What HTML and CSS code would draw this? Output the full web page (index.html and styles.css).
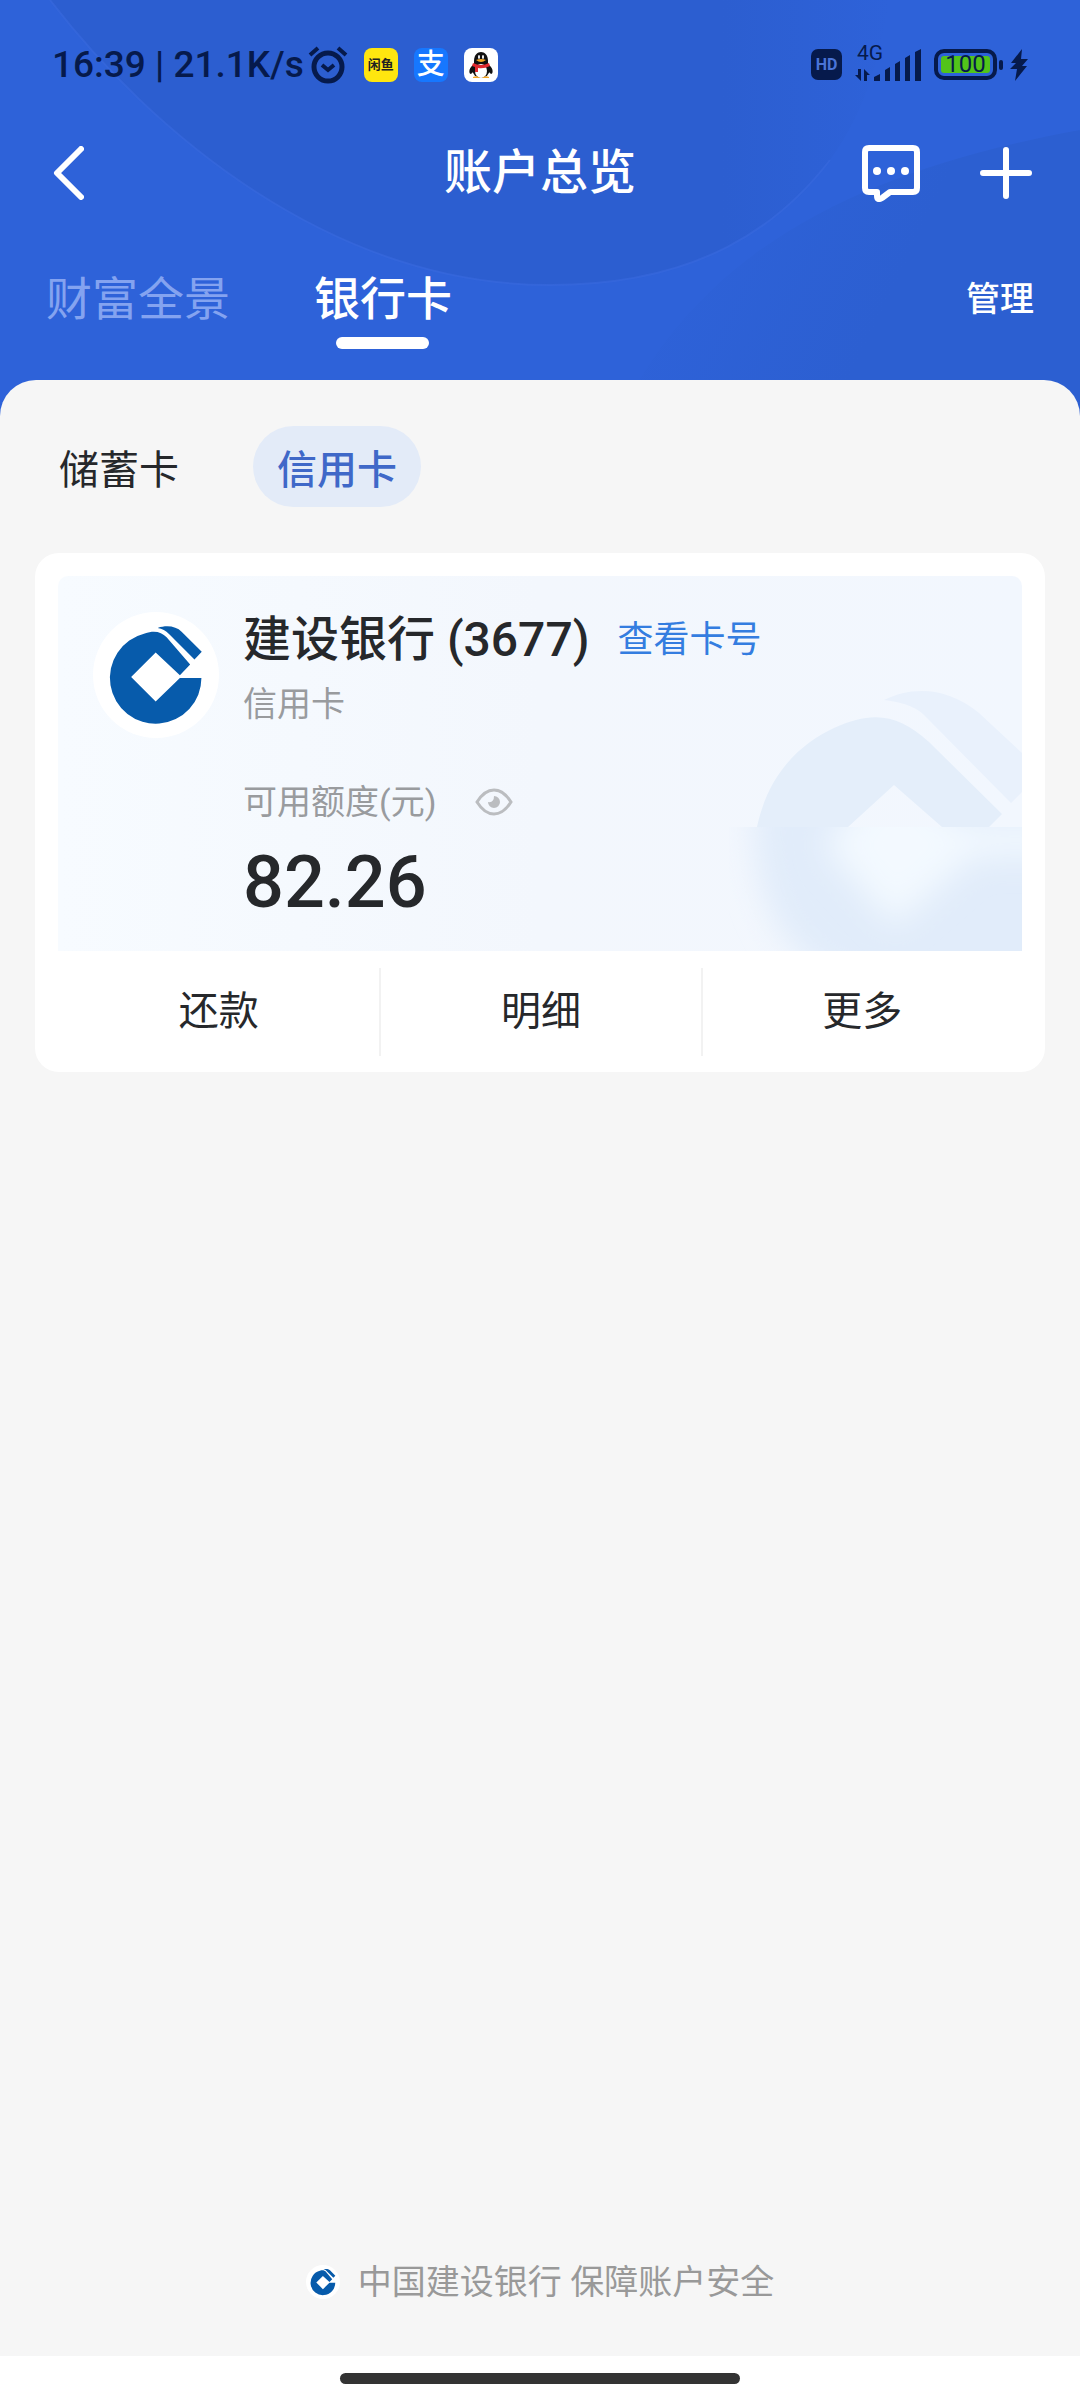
FILE: index.html
```
<!DOCTYPE html>
<html lang="zh-CN">
<head>
  <meta charset="UTF-8" />
  <meta name="viewport" content="width=device-width, initial-scale=1.0"/>
  <title>账户总览</title>
  <link rel="stylesheet" href="styles.css">
</head>
<body>
  <!-- shared bank logo -->
  <svg class="defs" width="0" height="0" aria-hidden="true">
    <symbol id="bank-logo" viewBox="22 18 380 380">
      <path d="M349 217A138 138 0 1 1 178 83C207 72 228 78 244 94L315 176L284 209L211 140L137 214L211 288L284 217Z"/>
      <path d="M217 66C246 57 272 61 290 78L350 138L328 161L252 85C241 74 231 68 217 66Z"/>
    </symbol>
  </svg>

  <header class="header">
    <svg class="header-bg" viewBox="0 0 1080 416" preserveAspectRatio="none" aria-hidden="true">
      <defs>
        <linearGradient id="shade" x1="0" y1="0" x2="1" y2="0.3">
          <stop offset="0.2" stop-color="#2c5fd1" stop-opacity="0"/>
          <stop offset="0.7" stop-color="#2c5fd1"/>
        </linearGradient>
        <linearGradient id="disc" x1="0" y1="0" x2="1" y2="0">
          <stop offset="0.8" stop-color="#2c5ed0"/>
          <stop offset="1" stop-color="#2c5ed0" stop-opacity="0"/>
        </linearGradient>
      </defs>
      <rect width="1080" height="416" fill="#2e62d9"/>
      <path d="M620 416C700 250 860 170 1080 130V416Z" fill="url(#shade)"/>
      <path d="M50 0C150 130 330 285 550 285C700 285 780 225 830 160C870 105 880 50 890 0Z" fill="url(#disc)"/>
      <path d="M50 0C150 130 330 285 550 285C700 285 780 225 830 160" fill="none" stroke="#3869de" stroke-width="2" opacity="0.6"/>
    </svg>

    <div class="status-bar">
      <div class="status-left">
        <span>16:39 | 21.1K/s</span>
        <svg class="alarm" viewBox="0 0 40 38" aria-hidden="true">
          <circle cx="20" cy="21" r="14" fill="none" stroke="#061a4c" stroke-width="5"/>
          <path d="M14 19l6 5 6-5M2 9l8-7M38 9l-8-7" fill="none" stroke="#061a4c" stroke-width="4"/>
        </svg>
        <span class="app app-fish">闲鱼</span>
        <span class="app app-pay">支</span>
        <span class="app app-qq">
          <svg viewBox="0 0 34 34" aria-hidden="true">
            <path d="M9 17C4 21 5 26 7 26L10 23ZM25 17C30 21 29 26 27 26L24 23Z" fill="#111"/>
            <ellipse cx="17" cy="21" rx="9" ry="9" fill="#111"/>
            <ellipse cx="17" cy="23" rx="6" ry="7" fill="#fff"/>
            <path d="M10 13C10 1 24 1 24 13V16H10Z" fill="#111"/>
            <ellipse cx="15" cy="9" rx="1" ry="2" fill="#fff"/>
            <ellipse cx="19" cy="9" rx="1" ry="2" fill="#fff"/>
            <path d="M12 12Q17 10 22 12Q17 16 12 12Z" fill="#f5a623"/>
            <path d="M9 15Q17 19 25 15L26 18Q20 21 14 20V24H11V19L8 18Z" fill="#e0292f"/>
            <path d="M9 29Q13 27 16 30H9ZM25 29Q21 27 18 30H25Z" fill="#f5a623"/>
          </svg>
        </span>
      </div>
      <div class="status-right">
        <span class="hd">HD</span>
        <div class="signal">
          <span class="signal-type">4G</span>
          <svg viewBox="0 0 66 32" aria-hidden="true">
            <path d="M6 20V32L0 26H3V20ZM9 32V20L15 26H12V32Z"/>
            <path d="M19 32V28L25 25V32ZM30 32V21L35 18V32ZM40 32V15L45 12V32ZM50 32V9L55 6V32ZM60 32V3L66 0V32Z"/>
          </svg>
        </div>
        <div class="battery"><span>100</span></div>
        <svg class="bolt" viewBox="0 0 18 32" aria-hidden="true">
          <path d="M12 0L1 14H6L0 20H7L5 32L17 17H12L18 10H11Z"/>
        </svg>
      </div>
    </div>

    <nav class="nav-bar">
      <button class="icon-btn" aria-label="返回">
        <svg width="32" height="54" viewBox="0 0 32 54"><path d="M29 3L5 27L29 51" stroke-width="6"/></svg>
      </button>
      <h1>账户总览</h1>
      <div class="nav-actions">
        <button class="icon-btn" aria-label="消息">
          <svg width="58" height="58" viewBox="0 0 58 58">
            <path d="M7 4H51Q55 4 55 8V44Q55 48 51 48H28L20 54Q15 57 15 52V48H7Q3 48 3 44V8Q3 4 7 4Z" stroke-width="6"/>
            <g class="dots"><circle cx="15" cy="27" r="4"/><circle cx="29" cy="27" r="4"/><circle cx="43" cy="27" r="4"/></g>
          </svg>
        </button>
        <button class="icon-btn" aria-label="添加">
          <svg width="54" height="54" viewBox="0 0 54 54"><path d="M26 4V50M3 27H49" stroke-width="6"/></svg>
        </button>
      </div>
    </nav>

    <div class="tabs">
      <button class="tab">财富全景</button>
      <button class="tab active">银行卡</button>
      <button class="manage">管理</button>
    </div>
  </header>

  <main class="sheet">
    <div class="chips">
      <button class="chip">储蓄卡</button>
      <button class="chip active">信用卡</button>
    </div>

    <section class="card">
      <div class="panel">
        <svg class="watermark" viewBox="0 0 293 281" aria-hidden="true">
          <defs>
            <filter id="soft" x="-20%" y="-20%" width="140%" height="140%"><feGaussianBlur stdDeviation="16"/></filter>
            <clipPath id="lower"><rect x="0" y="157" width="293" height="124"/></clipPath>
          </defs>
          <path d="M28 157C40 100 75 72 105 58C145 40 170 45 200 72L273 144L260 157H213L165 115L119 157Z" fill="#e4eefa"/>
          <path d="M155 30C185 15 220 18 250 43L293 83V122L282 133L195 45C185 35 170 32 155 30Z" fill="#e9f1fc"/>
          <g clip-path="url(#lower)">
            <path d="M28 100C10 250 70 320 180 320H330V120Z" fill="#e1ecfa" filter="url(#soft)"/>
            <path d="M165 95L232 155H330V185H245L165 255L95 175Z" fill="#f3f9ff" filter="url(#soft)"/>
          </g>
        </svg>
        <div class="badge"><svg><use href="#bank-logo"/></svg></div>
        <div class="info">
          <div class="bank">
            <h2>建设银行 (3677)</h2>
            <a href="#">查看卡号</a>
          </div>
          <p class="type">信用卡</p>
          <div class="limit">
            <span>可用额度(元)</span>
            <button class="eye" aria-label="隐藏额度">
              <svg width="38" height="28" viewBox="0 0 38 28">
                <path d="M2 14C12-2 26-2 36 14C26 30 12 30 2 14Z" fill="none" stroke="#bbbdc0" stroke-width="3"/>
                <path d="M19 8A6 6 0 1 1 13 14Q19 15 19 8Z" fill="#bbbdc0"/>
              </svg>
            </button>
          </div>
          <p class="amount">82.26</p>
        </div>
      </div>
      <div class="actions">
        <button>还款</button>
        <button>明细</button>
        <button>更多</button>
      </div>
    </section>

    <footer class="footer">
      <span class="badge badge-small"><svg><use href="#bank-logo"/></svg></span>
      <span>中国建设银行 保障账户安全</span>
    </footer>
  </main>

  <div class="home-bar"><span></span></div>
</body>
</html>
```

FILE: styles.css
```
* {
  box-sizing: border-box;
}
body {
  margin: 0;
  min-height: 100vh;
  display: flex;
  flex-direction: column;
  background-color: #f6f6f6;
  color: #26282b;
  font-family: Roboto, "Noto Sans CJK SC", sans-serif;
}
h1, h2, p {
  margin: 0;
}
button {
  padding: 0;
  border: 0;
  background: none;
  color: inherit;
  font: inherit;
  cursor: pointer;
}
svg {
  display: block;
}
.defs {
  position: absolute;
}

/* header */
.header {
  position: relative;
  padding-bottom: 36px;
  background-color: #2d61d5;
  color: #fff;
}
.header-bg {
  position: absolute;
  inset: 0;
  width: 100%;
  height: 100%;
}
.status-bar, .nav-bar, .tabs {
  position: relative;
  display: flex;
  align-items: center;
  justify-content: space-between;
}
.status-bar {
  height: 120px;
  padding: 9px 52px 0;
  color: #061a4c;
}
.status-left, .status-right {
  display: flex;
  align-items: center;
}
.status-left {
  gap: 16px;
  font-size: 37px;
  font-weight: 500;
  line-height: 48px;
}
.alarm {
  width: 40px;
  height: 38px;
  margin-left: -12px;
}
.app {
  width: 34px;
  height: 34px;
  border-radius: 8px;
  overflow: hidden;
  text-align: center;
  line-height: 34px;
}
.app-fish {
  background-color: #ffe60f;
  color: #222;
  font-size: 13px;
  font-weight: 700;
}
.app-pay {
  background-color: #1677ff;
  color: #fff;
  font-size: 28px;
}
.app-qq {
  background-color: #fff;
}
.status-right {
  gap: 13px;
}
.hd {
  width: 31px;
  height: 31px;
  border-radius: 7px;
  background-color: #061a4c;
  color: #4a74d8;
  font-size: 16px;
  font-weight: 700;
  line-height: 31px;
  text-align: center;
}
.signal {
  position: relative;
  width: 66px;
}
.signal svg, .bolt {
  fill: #061a4c;
}
.signal-type {
  position: absolute;
  left: 2px;
  top: -8px;
  font-size: 21px;
  line-height: 24px;
}
.battery {
  position: relative;
  width: 63px;
  height: 31px;
  padding: 3px;
  border: 4px solid #061a4c;
  border-radius: 10px;
}
.battery span {
  display: block;
  border-radius: 3px;
  background-color: #52c41a;
  font-size: 24px;
  line-height: 17px;
  text-align: center;
}
.battery::after {
  content: "";
  position: absolute;
  right: -10px;
  top: 7px;
  width: 4px;
  height: 10px;
  border-radius: 2px;
  background-color: #061a4c;
}
.bolt {
  width: 18px;
  height: 32px;
}
.nav-bar {
  height: 106px;
  padding: 0 46px 0 52px;
}
h1 {
  position: absolute;
  left: 50%;
  transform: translateX(-50%);
  font-size: 48px;
  font-weight: 500;
  line-height: 60px;
}
.nav-actions {
  display: flex;
  align-items: center;
  gap: 60px;
}
.icon-btn path {
  fill: none;
  stroke: #fff;
  stroke-linecap: round;
  stroke-linejoin: round;
}
.dots {
  fill: #fff;
}
.tabs {
  height: 154px;
  padding: 0 46px;
  gap: 84px;
  font-size: 46px;
  line-height: 60px;
}
.tab {
  position: relative;
  margin-bottom: 8px;
  color: #84a3f0;
}
.tab.active {
  color: #fff;
  font-weight: 500;
}
.tab.active::after {
  content: "";
  position: absolute;
  left: 50%;
  bottom: -20px;
  width: 93px;
  height: 12px;
  margin-left: -47px;
  border-radius: 6px;
  background-color: #fff;
}
.manage {
  margin: 0 0 8px auto;
  font-size: 34px;
  font-weight: 500;
}

/* content */
.sheet {
  position: relative;
  flex: 1;
  display: flex;
  flex-direction: column;
  margin-top: -36px;
  padding: 46px 35px 0;
  border-radius: 36px 36px 0 0;
  background-color: #f6f6f6;
}
.chips {
  display: flex;
  gap: 50px;
  margin-bottom: 46px;
}
.chip {
  height: 81px;
  padding: 0 24px;
  border-radius: 41px;
  font-size: 40px;
}
.chip.active {
  background-color: #e3ebf8;
  color: #3f68c8;
  font-weight: 500;
}
.card {
  padding: 23px 23px 0;
  border-radius: 24px;
  background-color: #fff;
}
.panel {
  position: relative;
  display: flex;
  gap: 24px;
  padding: 36px 35px 26px;
  border-radius: 10px 10px 0 0;
  background: linear-gradient(90deg, #f7fbff, #f3f7fd 50%, #f2f7fe);
  overflow: hidden;
}
.watermark {
  position: absolute;
  right: 0;
  bottom: 0;
  width: 293px;
  height: 281px;
}
.badge {
  flex: none;
  width: 126px;
  height: 126px;
  border-radius: 50%;
  background-color: #fff;
}
.badge svg {
  width: 100%;
  height: 100%;
  fill: #075bab;
}
.info {
  position: relative;
}
.bank {
  display: flex;
  align-items: center;
  gap: 28px;
  line-height: 56px;
}
h2 {
  font-size: 48px;
  font-weight: 500;
}
.bank a {
  color: #347de0;
  font-size: 36px;
  text-decoration: none;
}
.type, .limit {
  color: #999b9e;
  font-size: 34px;
  line-height: 44px;
}
.type {
  margin: 14px 0 54px;
}
.limit {
  display: flex;
  align-items: center;
  gap: 39px;
}
.amount {
  margin-top: 17px;
  font-size: 72px;
  font-weight: 500;
  line-height: 84px;
}
.actions {
  display: grid;
  grid-template-columns: repeat(3, 1fr);
  padding: 17px 0 16px;
}
.actions button {
  height: 88px;
  padding-bottom: 8px;
  font-size: 40px;
}
.actions button + button {
  border-left: 2px solid #f2f2f2;
}
.footer {
  display: flex;
  align-items: center;
  justify-content: center;
  gap: 18px;
  margin-top: auto;
  padding-bottom: 52px;
  color: #999;
  font-size: 34px;
  line-height: 44px;
}
.badge-small {
  width: 34px;
  height: 34px;
}
.home-bar {
  height: 44px;
  padding-top: 17px;
  background-color: #fff;
}
.home-bar span {
  display: block;
  width: 37%;
  height: 11px;
  margin: 0 auto;
  border-radius: 6px;
  background-color: #333;
}
```
